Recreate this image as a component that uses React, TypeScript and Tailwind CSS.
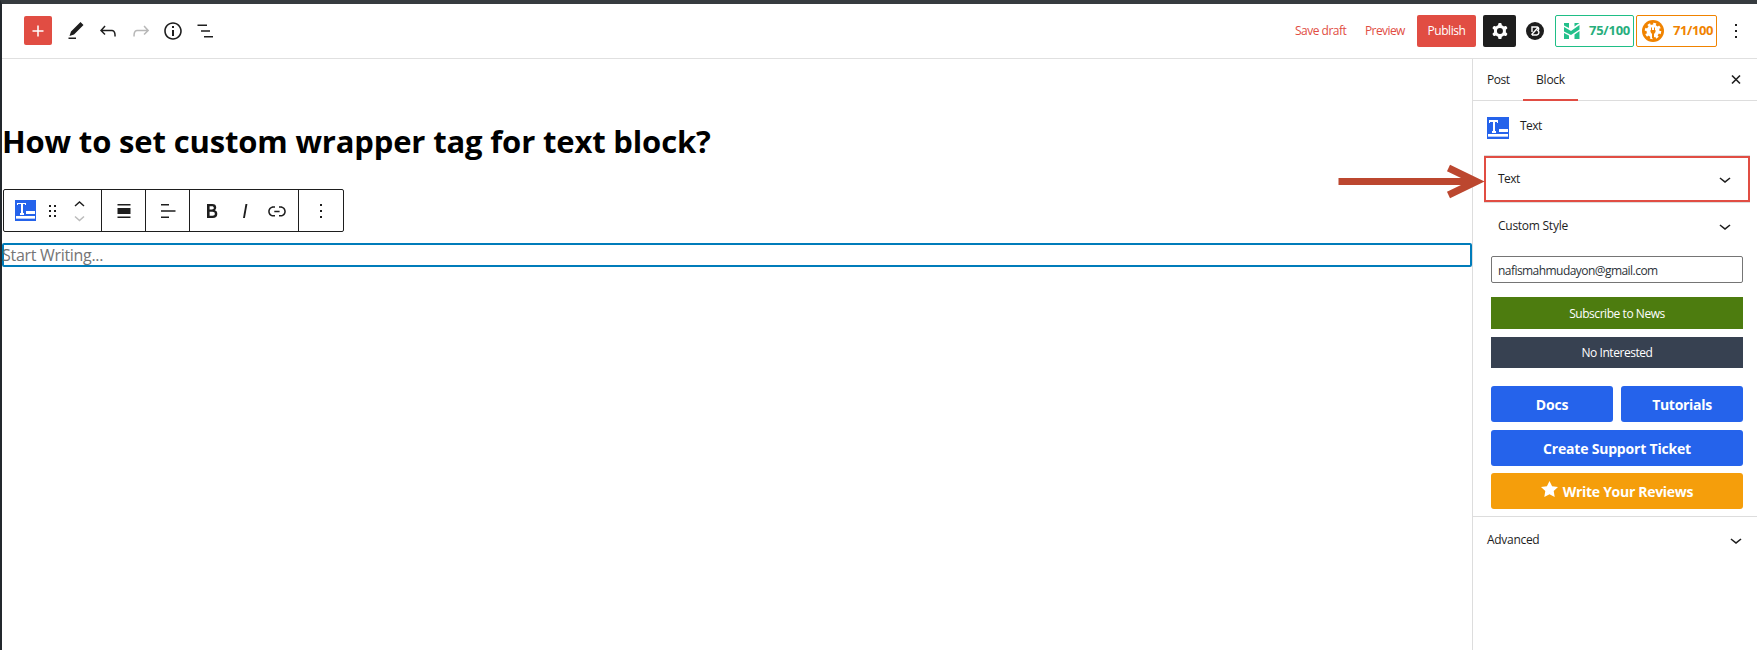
import React from 'react';

const Plus = () => (
  <svg width="28" height="28" viewBox="0 0 28 28" fill="none" stroke="#fff" strokeWidth="1.5"><path d="M14 8.500v11M8.500 14h11" /></svg>
);

const Chevron = ({ className = '' }: { className?: string }) => (
  <svg className={className} width="24" height="24" viewBox="0 0 24 24" fill="#1e1e1e"><path d="M17.500 11.600L12 16l-5.500-4.400.9-1.200L12 14l4.500-3.600 1 1.200z" /></svg>
);

const Kebab = () => (
  <svg width="24" height="24" viewBox="0 0 24 24" fill="#1e1e1e"><path d="M13 19h-2v-2h2v2zm0-6h-2v-2h2v2zm0-6h-2V5h2v2z" /></svg>
);

const TextBlockIcon = ({ size }: { size: number }) => (
  <svg width={size} height={size} viewBox="0 0 22 22" shapeRendering="crispEdges">
    <rect width="22" height="22" fill="#2563eb" />
    <path d="M2 3h9v2.500h-1V4.500H8V14h1v1.500H5V14h1V4.500H3v1H2zM12 12h9v3h-9zM1 17h20v2H1z" fill="#fff" />
    <path d="M1 19h20v1H1z" fill="#b3c8f8" />
  </svg>
);

function Header() {
  return (
    <header className="flex h-[55px] shrink-0 items-start border-b border-[#e0e0e0] pl-[22px]">
      <div className="mt-3 flex items-center">
        <button className="flex h-[29px] w-7 items-center justify-center rounded-xs bg-[#e14d43]"><Plus /></button>
        <svg className="ml-3" width="24" height="24" viewBox="0 0 24 24" fill="#1e1e1e"><path d="m19.500 6-3-3-9.500 9.500-1.500 4.500 4.500-1.500L19.500 6Zm-7.500 12.500H4.500V20H12v-1.500Z" /></svg>
        <svg className="ml-2" width="24" height="24" viewBox="0 0 24 24" fill="#1e1e1e"><path d="M18.300 11.700c-.6-.6-1.400-.9-2.300-.9H6.700l2.900-3.300-1.100-1-4.500 5L8.500 16l1-1-2.700-2.700H16c.5 0 .9.200 1.300.5 1 1 1 3.400 1 4.500v.3h1.500v-.2c0-1.500 0-4.300-1.500-5.700z" /></svg>
        <svg className="ml-[9px]" width="24" height="24" viewBox="0 0 24 24" fill="#b8b8b8"><path d="M15.600 6.500l-1.100 1 2.900 3.300H8c-.9 0-1.700.3-2.300.9-1.400 1.500-1.400 4.200-1.400 5.600v.2h1.500v-.3c0-1.100 0-3.500 1-4.500.3-.3.7-.5 1.300-.5h9.200L14.500 15l1.100 1.100 4.600-4.600-4.600-5z" /></svg>
        <svg className="ml-2" width="24" height="24" viewBox="0 0 24 24" fill="#1e1e1e"><path d="M12 3.200c-4.800 0-8.800 3.900-8.800 8.800 0 4.800 3.900 8.800 8.800 8.800 4.800 0 8.800-3.900 8.800-8.800 0-4.800-4-8.800-8.800-8.800zm0 16c-4 0-7.200-3.300-7.200-7.200C4.800 8 8 4.800 12 4.800s7.200 3.300 7.200 7.200c0 4-3.200 7.200-7.200 7.200zM11 17h2v-6h-2v6zm0-8h2V7h-2v2z" /></svg>
        <svg className="ml-2" width="24" height="24" viewBox="0 0 24 24" fill="#1e1e1e"><path d="M4.500 5.500h9.500V7H4.500zM8 11.200h9v1.600H8zM11 17h9v1.500h-9z" /></svg>
      </div>
      <div className="ml-auto mt-[11px] flex h-8 items-center text-[12px] text-[#e14d43]">
        <span className="w-[70px] tracking-[-0.5px]">Save draft</span>
        <span className="w-[52px] tracking-[-0.6px]">Preview</span>
        <button className="h-8 w-[59px] rounded-xs bg-[#e14d43] tracking-[-0.45px] text-white">Publish</button>
        <button className="ml-[7px] flex h-8 w-[33px] items-center justify-center rounded-xs bg-[#1e1e1e]">
          <svg width="24" height="24" viewBox="0 0 24 24" fill="#fff"><path fillRule="evenodd" clipRule="evenodd" d="M10.289 4.836A1 1 0 0111.275 4h1.306a1 1 0 01.987.836l.244 1.466c.787.260 1.503.679 2.108 1.218l1.393-.522a1 1 0 011.216.437l.653 1.130a1 1 0 01-.230 1.273l-1.148.944a6.025 6.025 0 010 2.435l1.149.946a1 1 0 01.230 1.272l-.653 1.130a1 1 0 01-1.216.437l-1.394-.522c-.605.540-1.320.958-2.108 1.218l-.244 1.466a1 1 0 01-.987.836h-1.306a1 1 0 01-.986-.836l-.244-1.466a5.995 5.995 0 01-2.108-1.218l-1.394.522a1 1 0 01-1.217-.436l-.653-1.131a1 1 0 01.230-1.272l1.149-.946a6.026 6.026 0 010-2.435l-1.148-.944a1 1 0 01-.230-1.272l.653-1.131a1 1 0 011.217-.437l1.393.522a5.994 5.994 0 012.108-1.218l.244-1.466zM14.929 12a3 3 0 11-6 0 3 3 0 016 0z" /></svg>
        </button>
        <svg className="ml-[10px]" width="18" height="18" viewBox="0 0 18 18"><circle cx="9" cy="9" r="9" fill="#1e1e1e" /><path d="M6 10V5h5.200c2 .2 1.800 2.600.6 3.600 1.800.8 1.400 4-1 4.400H6M12.500 5 5.500 12.800" fill="none" stroke="#fff" strokeWidth="1.400" /></svg>
        <div className="ml-[11px] flex h-8 w-[79px] items-center rounded-xs border border-[#1fbe86] text-[#27ae7c]">
          <svg className="ml-2" width="16" height="16" viewBox="0 0 16 16" fill="#23c08b"><path d="M0 0h5v5L0 2.500zM0 4l7 4 8.500-6v4.500L7 12 0 8.500zM0 10l5 2.500V16H0zM10.500 0h5l-5 3.500zM10.500 11.500l5-3.500v8h-5z" /></svg>
          <b className="ml-[9px] text-[13px] tracking-[-0.25px]">75/100</b>
        </div>
        <div className="ml-0.5 flex h-8 w-[81px] items-center rounded-xs border border-[#f08300] text-[#f08300]">
          <svg className="ml-[5px]" width="22" height="22" viewBox="0 0 22 22"><circle cx="11" cy="11" r="11" fill="#f08300" /><circle cx="11" cy="11" r="6.500" fill="#fff" /><circle cx="11" cy="11" r="7" fill="none" stroke="#fff" strokeWidth="2.500" strokeDasharray="2.750 2.750" /><path d="M8.500 10h5v2l-1.500 2v4.500h-2V14l-1.500-2zM9 7.500h1V10H9zM12 7.500h1V10h-1z" fill="#f08300" /></svg>
          <b className="ml-[9px] text-[13px] tracking-[-0.4px]">71/100</b>
        </div>
        <div className="ml-[7px] mr-[9px]"><Kebab /></div>
      </div>
    </header>
  );
}

function Toolbar() {
  return (
    <div className="ml-px mt-[29px] flex h-[43px] w-[341px] rounded-xs border border-[#1e1e1e] bg-white [&>div]:flex [&>div]:items-center [&>div]:border-[#1e1e1e]">
      <div className="w-[98px] border-r pl-[11px]">
        <TextBlockIcon size={21} />
        <svg className="ml-1" width="24" height="24" viewBox="0 0 24 24" fill="#1e1e1e"><path d="M9 6h2v2H9zM14 6h2v2h-2zM9 11h2v2H9zM14 11h2v2h-2zM9 16h2v2H9zM14 16h2v2h-2z" /></svg>
        <svg className="ml-[3px]" width="24" height="40" viewBox="0 0 24 40" fill="none" strokeWidth="1.500"><path d="m8 15 4.500-4 4.500 4" stroke="#1e1e1e" /><path d="m8 25.500 4.500 4 4.500-4" stroke="#bbb" /></svg>
      </div>
      <div className="w-11 justify-center border-r">
        <svg width="24" height="24" viewBox="0 0 24 24" fill="#1e1e1e"><path d="M5.500 5h13v1.400h-13zM5.500 9h13v6h-13zM5.500 17.600h13V19h-13z" /></svg>
      </div>
      <div className="w-11 justify-center border-r">
        <svg width="24" height="24" viewBox="0 0 24 24" fill="#1e1e1e"><path d="M5 5h8v1.400H5zM5 11.200h14.500v1.500H5zM5 17.600h8V19H5z" /></svg>
      </div>
      <div className="w-[109px] border-r pl-[10px]">
        <svg width="24" height="24" viewBox="0 0 24 24" fill="#1e1e1e"><path d="M14.700 11.300c1-.6 1.500-1.600 1.500-3 0-2.300-1.300-3.400-4-3.400H7v14h5.800c1.400 0 2.500-.3 3.300-1 .8-.7 1.200-1.700 1.200-2.900.1-1.900-.8-3.100-2.600-3.700zm-5.100-4h2.300c.6 0 1.100.1 1.400.4.300.3.500.7.500 1.200s-.2 1-.5 1.200c-.3.3-.8.4-1.400.4H9.600V7.300zm4.600 9c-.4.300-1 .4-1.700.4H9.600v-3.900h2.900c.7 0 1.300.2 1.700.5.400.3.600.8.600 1.500s-.2 1.200-.6 1.500z" /></svg>
        <svg className="ml-[9px]" width="24" height="24" viewBox="0 0 24 24" fill="#1e1e1e"><path d="M12.500 5L10 19h1.900l2.500-14z" /></svg>
        <svg className="ml-[8px]" width="24" height="24" viewBox="0 0 24 24" fill="#1e1e1e"><path d="M15.600 7.200H14v1.500h1.600c2 0 3.700 1.700 3.700 3.700s-1.700 3.700-3.700 3.700H14v1.500h1.600c2.800 0 5.200-2.300 5.200-5.200 0-2.900-2.300-5.200-5.200-5.200zM4.700 12.400c0-2 1.700-3.700 3.700-3.700H10V7.200H8.400c-2.900 0-5.200 2.300-5.200 5.200 0 2.900 2.300 5.200 5.200 5.200H10v-1.500H8.400c-2 0-3.700-1.700-3.700-3.700zm4.600.9h5.300v-1.500H9.300v1.500z" /></svg>
      </div>
      <div className="flex-1 justify-center"><Kebab /></div>
    </div>
  );
}

function Sidebar() {
  return (
    <aside className="w-[285px] shrink-0 border-l border-[#ddd] text-[12px] text-[#1e1e1e]">
      <div className="flex h-[42px] border-b border-[#ddd]">
        <div className="w-[50px] pl-[14px] leading-[42px] tracking-[-0.5px]">Post</div>
        <div className="relative -mb-px h-[42px] w-[55px] border-b-2 border-[#e14d43] text-center leading-[42px] tracking-[-0.25px]">Block</div>
        <svg className="ml-auto mr-[9px] mt-[9px]" width="24" height="24" viewBox="0 0 24 24" fill="none" stroke="#1e1e1e" strokeWidth="1.600"><path d="m8 7.500 8 8M16 7.500l-8 8" /></svg>
      </div>
      <div className="flex h-[54px] pl-[14px] pt-4">
        <TextBlockIcon size={22} />
        <span className="ml-[11px] leading-[17px] tracking-[-0.55px]">Text</span>
      </div>
      <div className="ml-[11px] w-[266px] border-y border-[#ddd]">
        <div className="flex h-[46px] items-center border-2 border-[#e14d43] pl-3 pr-[11px]">
          <span className="tracking-[-0.55px]">Text</span><Chevron className="ml-auto" />
        </div>
      </div>
      <div className="ml-[25px] mr-5 flex h-[46px] items-center">
        <span className="tracking-[-0.26px]">Custom Style</span><Chevron className="ml-auto" />
      </div>
      <div className="ml-[18px] mt-[7px] flex w-[252px] flex-col text-white">
        <div className="h-[27px] rounded-xs border border-[#757575] pl-1.5 leading-[27px] tracking-[-0.55px] text-[#2c3338]">nafismahmudayon@gmail.com</div>
        <button className="mt-[14px] h-8 bg-[#4d7c0f] pt-px tracking-[-0.45px]">Subscribe to News</button>
        <button className="mt-2 h-[31px] bg-[#374151] tracking-[-0.45px]">No Interested</button>
        <div className="mt-[18px] grid grid-cols-2 gap-2 text-[14px] font-bold tracking-[-0.2px] [&>button]:h-9 [&>button]:rounded-[3px]">
          <button className="bg-[#2563eb]">Docs</button>
          <button className="bg-[#2563eb] tracking-[-0.3px]">Tutorials</button>
          <button className="col-span-2 bg-[#2563eb]">Create Support Ticket</button>
          <button className="col-span-2 -mt-px flex items-center justify-center bg-[#f59e0b]">
            <svg className="mr-[5px] -mt-1" width="17" height="16" viewBox="0 0 17 16" fill="#fff"><path d="m8.500 0 2.600 5.200 5.900.8-4.300 4.100 1 5.900-5.200-2.800L3.300 16l1-5.900L0 6l5.900-.8z" /></svg>
            <span className="tracking-[-0.3px]">Write Your Reviews</span>
          </button>
        </div>
      </div>
      <div className="mt-[7px] flex h-[47px] items-center border-t border-[#ddd] pl-[14px] pr-[9px]">
        <span className="tracking-[-0.3px]">Advanced</span><Chevron className="ml-auto" />
      </div>
    </aside>
  );
}

export default function App() {
  return (
    <div className="relative flex h-[650px] w-[1757px] flex-col overflow-hidden border-l-2 border-t-4 border-l-[#23282d] border-t-[#363b3f] bg-white font-['Open_Sans','Noto_Sans',sans-serif]">
      <Header />
      <div className="flex min-h-0 flex-1">
        <main className="flex-1">
          <h1 className="mt-[60px] h-[41px] whitespace-nowrap text-[31px] font-bold leading-[45px] tracking-[-0.16px] text-black">How to set custom wrapper tag for text block?</h1>
          <Toolbar />
          <div className="mt-[11px] h-6 rounded-xs border-2 border-[#007cba] text-[16px] leading-[21px] text-[#757575]"><span className="-ml-0.5 tracking-[-0.3px]">Start Writing...</span></div>
        </main>
        <Sidebar />
      </div>
      <svg className="absolute left-[1336px] top-[159px]" width="148" height="38" viewBox="0 0 148 38" fill="none" stroke="#bc472f" strokeWidth="7"><path d="M0.500 18.500h136M110.500 5l28 13.500-28 13.500" /></svg>
      <div className="absolute -left-0.5 top-[82px] flex h-[31px] w-0.5 flex-col justify-between bg-white"><i className="h-[9px] bg-[#e14d43]" /><i className="h-[9px] bg-[#e14d43]" /></div>
    </div>
  );
}
